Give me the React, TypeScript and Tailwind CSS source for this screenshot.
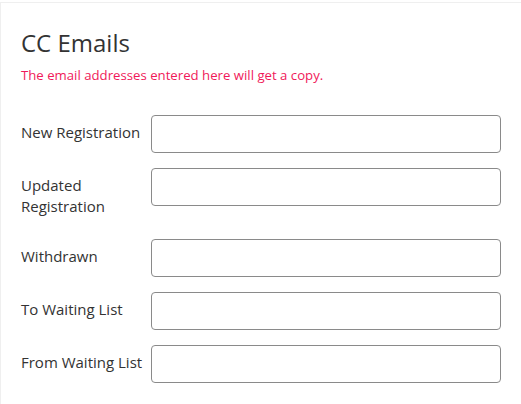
const rows = [
  "New Registration",
  "Updated Registration",
  "Withdrawn",
  "To Waiting List",
  "From Waiting List",
];

export default function App() {
  return (
    <div className="flex min-h-screen flex-col bg-white pt-[2px] font-['Open_Sans',sans-serif] text-[#333]">
      <div className="flex-1 border-l border-t border-[#efefef] px-5 pt-[26px]">
        <h4 className="text-[24px] leading-[1.2]">CC Emails</h4>
        <p className="mt-[7px] text-[13.2px] leading-[20px] text-[#f0195a]">
          The email addresses entered here will get a copy.
        </p>
        <div className="mt-[30px]">
          {rows.map((label) => (
            <div key={label} className="mb-[15px] flex items-start">
              <label className="w-[130px] shrink-0 py-[7px] text-[15px] leading-[21px]">
                {label}
              </label>
              <input
                type="text"
                className="h-[38px] min-w-0 flex-1 rounded-[4px] border border-[#8a8a8a] bg-white px-3 outline-none"
              />
            </div>
          ))}
        </div>
      </div>
    </div>
  );
}
